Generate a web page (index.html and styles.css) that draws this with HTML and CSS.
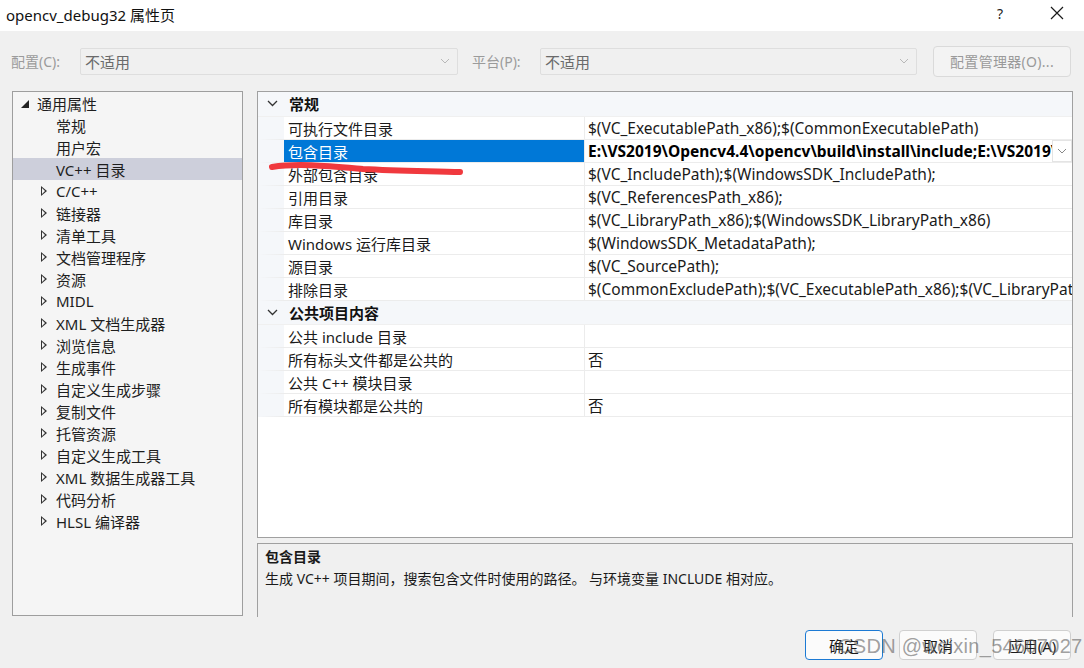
FILE: index.html
```html
<!DOCTYPE html>
<html lang="zh">
<head>
<meta charset="utf-8">
<title>opencv_debug32 属性页</title>
<link rel="stylesheet" href="styles.css">
</head>
<body>
<div class="dialog">
  <div class="titlebar">
    <span class="title">opencv_debug32 属性页</span>
    <span class="tb-help">?</span>
    <span class="tb-close">
      <svg width="14" height="14" viewBox="0 0 14 14"><path d="M1 1L13 13M13 1L1 13" stroke="#1a1a1a" stroke-width="1.2" fill="none"/></svg>
    </span>
  </div>

  <div class="toolbar">
    <span class="lbl lbl-config">配置(C):</span>
    <div class="combo combo-config"><span>不适用</span><svg class="chev" width="10" height="6" viewBox="0 0 10 6"><path d="M1 1L5 5L9 1" stroke="#b8b8b8" fill="none"/></svg></div>
    <span class="lbl lbl-plat">平台(P):</span>
    <div class="combo combo-plat"><span>不适用</span><svg class="chev" width="10" height="6" viewBox="0 0 10 6"><path d="M1 1L5 5L9 1" stroke="#b8b8b8" fill="none"/></svg></div>
    <div class="cfgbtn">配置管理器(O)...</div>
  </div>

  <div class="main">
    <div class="tree">
      <div class="node root"><span class="arr-open"></span><span>通用属性</span></div>
      <div class="node child"><span>常规</span></div>
      <div class="node child"><span>用户宏</span></div>
      <div class="node child sel"><span>VC++ 目录</span></div>
      <div class="node coll"><span class="arr"></span><span>C/C++</span></div>
      <div class="node coll"><span class="arr"></span><span>链接器</span></div>
      <div class="node coll"><span class="arr"></span><span>清单工具</span></div>
      <div class="node coll"><span class="arr"></span><span>文档管理程序</span></div>
      <div class="node coll"><span class="arr"></span><span>资源</span></div>
      <div class="node coll"><span class="arr"></span><span>MIDL</span></div>
      <div class="node coll"><span class="arr"></span><span>XML 文档生成器</span></div>
      <div class="node coll"><span class="arr"></span><span>浏览信息</span></div>
      <div class="node coll"><span class="arr"></span><span>生成事件</span></div>
      <div class="node coll"><span class="arr"></span><span>自定义生成步骤</span></div>
      <div class="node coll"><span class="arr"></span><span>复制文件</span></div>
      <div class="node coll"><span class="arr"></span><span>托管资源</span></div>
      <div class="node coll"><span class="arr"></span><span>自定义生成工具</span></div>
      <div class="node coll"><span class="arr"></span><span>XML 数据生成器工具</span></div>
      <div class="node coll"><span class="arr"></span><span>代码分析</span></div>
      <div class="node coll"><span class="arr"></span><span>HLSL 编译器</span></div>
    </div>

    <div class="right">
      <div class="grid">
        <div class="cat first"><svg class="cat-chev" width="11" height="7" viewBox="0 0 11 7"><path d="M1 1L5.5 5.5L10 1" stroke="#333" stroke-width="1.3" fill="none"/></svg><span>常规</span></div>
        <div class="row"><div class="name">可执行文件目录</div><div class="val">$(VC_ExecutablePath_x86);$(CommonExecutablePath)</div></div>
        <div class="row selrow"><div class="name">包含目录</div><div class="val bold"><span class="valtext">E:\VS2019\Opencv4.4\opencv\build\install\include;E:\VS2019\Opencv4.4\opencv\build\install\include\opencv2;$(IncludePath)</span><span class="ddbtn"><svg width="10" height="6" viewBox="0 0 10 6"><path d="M1 1L5 5L9 1" stroke="#888" fill="none"/></svg></span></div></div>
        <div class="row"><div class="name">外部包含目录</div><div class="val">$(VC_IncludePath);$(WindowsSDK_IncludePath);</div></div>
        <div class="row"><div class="name">引用目录</div><div class="val">$(VC_ReferencesPath_x86);</div></div>
        <div class="row"><div class="name">库目录</div><div class="val">$(VC_LibraryPath_x86);$(WindowsSDK_LibraryPath_x86)</div></div>
        <div class="row"><div class="name">Windows 运行库目录</div><div class="val">$(WindowsSDK_MetadataPath);</div></div>
        <div class="row"><div class="name">源目录</div><div class="val">$(VC_SourcePath);</div></div>
        <div class="row"><div class="name">排除目录</div><div class="val">$(CommonExcludePath);$(VC_ExecutablePath_x86);$(VC_LibraryPath_x86)</div></div>
        <div class="cat"><svg class="cat-chev" width="11" height="7" viewBox="0 0 11 7"><path d="M1 1L5.5 5.5L10 1" stroke="#333" stroke-width="1.3" fill="none"/></svg><span>公共项目内容</span></div>
        <div class="row"><div class="name">公共 include 目录</div><div class="val"></div></div>
        <div class="row"><div class="name">所有标头文件都是公共的</div><div class="val">否</div></div>
        <div class="row"><div class="name">公共 C++ 模块目录</div><div class="val"></div></div>
        <div class="row"><div class="name">所有模块都是公共的</div><div class="val">否</div></div>
      </div>
      <div class="desc">
        <div class="desc-title">包含目录</div>
        <div class="desc-text">生成 VC++ 项目期间，搜索包含文件时使用的路径。 与环境变量 INCLUDE 相对应。</div>
      </div>
    </div>
  </div>

  <div class="buttons">
    <div class="btn default">确定</div>
    <div class="btn">取消</div>
    <div class="btn">应用(A)</div>
  </div>

  <svg class="redmark" width="210" height="24" viewBox="0 0 210 24">
    <path d="M4 9 C 30 5, 60 8, 95 11 C 130 13, 165 13, 192 14" stroke="#f0393e" stroke-width="6" stroke-linecap="round" fill="none"/>
  </svg>
  <div class="watermark">CSDN @weixin_54607027</div>
</div>
</body>
</html>
```

FILE: styles.css
```css
* { box-sizing: border-box; }
html, body {
  margin: 0;
  padding: 0;
}
body {
  width: 1084px;
  height: 668px;
  overflow: hidden;
  background: #f0f0f0;
  font-family: "Noto Sans", "Noto Sans CJK SC", sans-serif;
  font-size: 15px;
  color: #1a1a1a;
}
.dialog {
  position: relative;
  width: 1084px;
  height: 668px;
  display: flex;
  flex-direction: column;
}
.titlebar {
  height: 31px;
  background: #ffffff;
  display: flex;
  align-items: center;
  padding-left: 6px;
  flex-shrink: 0;
}
.title {
  font-size: 15px;
  color: #111;
  flex: 1;
  line-height: 1;
}
.tb-help {
  width: 14px;
  font-size: 14px;
  color: #222;
  margin-right: 39px;
  margin-top: -4px;
}
.tb-close {
  width: 14px;
  height: 14px;
  margin-right: 20px;
  margin-top: -6px;
  display: flex;
}

/* toolbar */
.toolbar {
  display: flex;
  align-items: center;
  height: 30px;
  margin-top: 15px;
  padding-left: 11px;
  flex-shrink: 0;
}
.lbl {
  color: #9b9b9b;
  font-size: 14px;
}
.lbl-config { width: 69px; }
.lbl-plat { width: 68px; margin-left: 14px; }
.combo {
  height: 27px;
  border: 1px solid #dedede;
  border-radius: 2px;
  background: #f0f0f0;
  display: flex;
  align-items: center;
  padding-left: 4px;
  padding-right: 7px;
  color: #6a6a6a;
  font-size: 15px;
}
.combo span { flex: 1; }
.combo-config { width: 378px; }
.combo-plat { width: 377px; }
.cfgbtn {
  margin-left: 16px;
  width: 138px;
  height: 31px;
  border: 1px solid #dadada;
  border-radius: 4px;
  background: #f3f3f3;
  color: #9a9a9a;
  font-size: 14px;
  display: flex;
  align-items: center;
  justify-content: center;
  letter-spacing: 0.3px;
}

/* main */
.main {
  display: flex;
  margin-top: 15px;
  padding-left: 12px;
  height: 526px;
  flex-shrink: 0;
}
.tree {
  width: 231px;
  height: 525px;
  border: 1px solid #9e9e9e;
  background: #f5f5f5;
  padding-top: 0;
}
.node {
  height: 22px;
  display: flex;
  align-items: center;
  font-size: 15px;
  color: #1e1e1e;
  white-space: nowrap;
}
.node.root { padding-left: 8px; }
.node.child { padding-left: 43px; }
.node.coll { padding-left: 27px; }
.node.sel { background: #cdcfdb; }
.arr-open {
  width: 0; height: 0;
  border-left: 8px solid transparent;
  border-bottom: 8px solid #222;
  margin-right: 8px;
  margin-top: 1px;
}
.arr {
  width: 0; height: 0;
  border-top: 5px solid transparent;
  border-bottom: 5px solid transparent;
  border-left: 6px solid #333;
  position: relative;
  margin-right: 9px;
  margin-left: 1px;
}
.arr::after {
  content: "";
  position: absolute;
  left: -5px;
  top: -3px;
  width: 0; height: 0;
  border-top: 3px solid transparent;
  border-bottom: 3px solid transparent;
  border-left: 3px solid #f5f5f5;
}

.right {
  margin-left: 14px;
  width: 816px;
  display: flex;
  flex-direction: column;
}
.grid {
  height: 447px;
  border: 1px solid #a0a0a0;
  background: #ffffff;
  margin-top: 0;
  overflow: hidden;
}
.cat {
  height: 24px;
  background: #f5f7fa;
  display: flex;
  align-items: center;
  font-weight: bold;
  font-size: 15px;
  color: #111;
  border-bottom: 1px solid #f0f0f0;
}
.cat.first {
  height: 25px;
  padding-bottom: 1px;
}
.cat-chev {
  margin-left: 9px;
  margin-right: 11px;
}
.row {
  height: 23px;
  display: flex;
  border-left: 26px solid #f5f7fa;
  border-bottom: 1px solid #ececec;
}
.row .name {
  width: 301px;
  flex-shrink: 0;
  padding-left: 4px;
  display: flex;
  align-items: center;
  white-space: nowrap;
  border-right: 1px solid #ececec;
  font-size: 15px;
  color: #1a1a1a;
}
.row .val {
  flex: 1;
  display: flex;
  align-items: center;
  padding-left: 3px;
  white-space: nowrap;
  overflow: hidden;
  font-size: 15.5px;
  color: #1a1a1a;
}
.selrow .name {
  background: #0078d7;
  color: #ffffff;
}
.val.bold { font-weight: bold; color: #000; position: relative; }
.valtext { overflow: hidden; flex: 1; }
.ddbtn {
  width: 20px;
  height: 22px;
  border: 1px solid #e4e4e4;
  background: #ffffff;
  display: flex;
  align-items: center;
  justify-content: center;
  flex-shrink: 0;
}

.desc {
  margin-top: 5px;
  height: 74px;
  border: 1px solid #a0a0a0;
  border-bottom: none;
  background: #f0f0f0;
  padding: 3px 7px;
}
.desc-title {
  font-weight: bold;
  font-size: 14px;
  line-height: 20px;
}
.desc-text {
  font-size: 14px;
  line-height: 22px;
  margin-top: 1px;
}

.buttons {
  display: flex;
  justify-content: flex-end;
  gap: 16px;
  padding-right: 13px;
  margin-top: 13px;
}
.btn {
  width: 78px;
  height: 30px;
  border: 1px solid #d0d0d0;
  border-radius: 4px;
  background: #fbfbfb;
  display: flex;
  align-items: center;
  justify-content: center;
  font-size: 15px;
  color: #1a1a1a;
}
.btn.default {
  border-color: #1c7ad4;
}

.redmark {
  position: absolute;
  left: 268px;
  top: 158px;
}
.watermark {
  position: absolute;
  left: 838px;
  top: 635px;
  font-size: 20px;
  letter-spacing: 0.3px;
  color: rgba(100, 100, 100, 0.62);
  font-family: "Liberation Sans", "Noto Sans", sans-serif;
  white-space: nowrap;
}
```
